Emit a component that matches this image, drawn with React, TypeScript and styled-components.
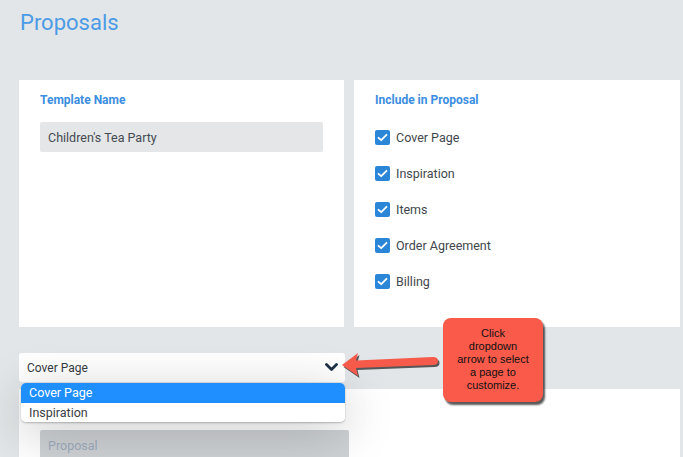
import React from "react";
import styled, { createGlobalStyle } from "styled-components";

const Global = createGlobalStyle`
  html, body { margin: 0; padding: 0; background: #e3e6e8; }
  body { font-family: Roboto, "Liberation Sans", Arial, sans-serif; overflow: hidden; }
  * { box-sizing: border-box; }
`;

const Page = styled.div`
  position: relative;
  width: 683px;
  height: 457px;
  padding: 0 3px 0 19px;
  background: #e3e6e8;
  overflow: hidden;
`;

const Header = styled.div`
  height: 80px;
  padding-top: 10px;
`;

const Title = styled.h1`
  margin: 0 0 0 1px;
  font-size: 22px;
  font-weight: 400;
  line-height: 26px;
  color: #4b9be6;
`;

const CardRow = styled.div`
  display: grid;
  grid-template-columns: 325px 326px;
  gap: 10px;
  height: 247px;
`;

const Card = styled.div`
  background: #ffffff;
  padding: 13px 21px 0 21px;
`;

const Label = styled.div`
  font-size: 12px;
  font-weight: 700;
  line-height: 14px;
  color: #3b8ee0;
`;

const Field = styled.div<{ $muted?: boolean; $w: number }>`
  width: ${(p) => p.$w}px;
  height: 30px;
  display: flex;
  align-items: center;
  padding-left: 8px;
  border-radius: 2px;
  background: ${(p) => (p.$muted ? "#cfd2d5" : "#e4e6e8")};
  font-size: 12.5px;
  color: ${(p) => (p.$muted ? "#9eacbd" : "#444a50")};
`;

const TemplateField = styled(Field)`
  margin-top: 15px;
`;

const CheckList = styled.div`
  margin-top: 12px;
  display: flex;
  flex-direction: column;
`;

const CheckRow = styled.div`
  height: 36px;
  display: flex;
  align-items: center;
  gap: 6px;
  font-size: 12.5px;
  color: #41474d;
`;

const Box = styled.span`
  width: 15px;
  height: 15px;
  border-radius: 2px;
  background: #2c86d8;
  display: flex;
  align-items: center;
  justify-content: center;
`;

const SelectWrap = styled.div`
  position: relative;
  margin-top: 26px;
  width: 326px;
  z-index: 2;
`;

const Select = styled.div`
  height: 29px;
  background: #ffffff;
  border-radius: 3px;
  display: flex;
  align-items: center;
  justify-content: space-between;
  padding: 0 7px 0 8px;
  font-size: 12px;
  color: #363c42;
`;

const Menu = styled.div`
  position: absolute;
  top: 30px;
  left: 2px;
  width: 324px;
  background: #ffffff;
  border-radius: 5px;
  overflow: hidden;
  box-shadow: 0 1px 2px rgba(0, 0, 0, 0.25), 0 10px 50px rgba(0, 0, 0, 0.22);
`;

const Option = styled.div<{ $active?: boolean }>`
  height: 19.5px;
  display: flex;
  align-items: center;
  padding-left: 8px;
  font-size: 12.5px;
  background: ${(p) => (p.$active ? "#1f8fff" : "#ffffff")};
  color: ${(p) => (p.$active ? "#ffffff" : "#3a4046")};
`;

const LowerCard = styled.div`
  margin-top: 7px;
  width: 661px;
  height: 120px;
  background: #ffffff;
  padding: 41px 21px 0 21px;
`;

const Callout = styled.div`
  position: absolute;
  left: 443px;
  top: 318px;
  width: 100px;
  height: 84px;
  background: #fa5a4a;
  border-radius: 8px;
  box-shadow: 2px 3px 2px rgba(0, 0, 0, 0.65);
  padding-top: 9px;
  text-align: center;
  font-family: "Liberation Sans", Arial, sans-serif;
  font-size: 11px;
  line-height: 13px;
  color: #111111;
  z-index: 3;
`;

const ArrowSvg = styled.svg`
  position: absolute;
  left: 336px;
  top: 346px;
  z-index: 3;
  overflow: visible;
`;

const Chevron = () => (
  <svg width="13" height="9" viewBox="0 0 13 9">
    <path d="M1.5 1.5 L6.5 6.5 L11.5 1.5" fill="none" stroke="#1d3046" strokeWidth="2.8" strokeLinecap="round" strokeLinejoin="round" />
  </svg>
);

const Check = () => (
  <svg width="11" height="9" viewBox="0 0 11 9">
    <path d="M1.5 4.8 L4.2 7.2 L9.5 1.8" fill="none" stroke="#ffffff" strokeWidth="1.8" strokeLinecap="round" strokeLinejoin="round" />
  </svg>
);

const items = ["Cover Page", "Inspiration", "Items", "Order Agreement", "Billing"];

const arrowPath =
  "M6 19 L22 7 L20 14.5 L97 11 Q102 11 102 15 Q102 19 97 19 L20 22 L22 30 Z";

export default function App() {
  return (
    <>
      <Global />
      <Page>
        <Header>
          <Title>Proposals</Title>
        </Header>
        <CardRow>
          <Card>
            <Label>Template Name</Label>
            <TemplateField $w={283}>Children's Tea Party</TemplateField>
          </Card>
          <Card>
            <Label>Include in Proposal</Label>
            <CheckList>
              {items.map((t) => (
                <CheckRow key={t}>
                  <Box>
                    <Check />
                  </Box>
                  {t}
                </CheckRow>
              ))}
            </CheckList>
          </Card>
        </CardRow>
        <SelectWrap>
          <Select>
            <span>Cover Page</span>
            <Chevron />
          </Select>
          <Menu>
            <Option $active>Cover Page</Option>
            <Option>Inspiration</Option>
          </Menu>
        </SelectWrap>
        <LowerCard>
          <Field $muted $w={309}>Proposal</Field>
        </LowerCard>
        <ArrowSvg width="106" height="34" viewBox="0 0 106 34">
          <path d={arrowPath} fill="#1a1a1a" opacity="0.7" transform="translate(1.5 2)" />
          <path d={arrowPath} fill="#f65a4b" />
        </ArrowSvg>
        <Callout>
          Click
          <br />
          dropdown
          <br />
          arrow to select
          <br />
          a page to
          <br />
          customize.
        </Callout>
      </Page>
    </>
  );
}
